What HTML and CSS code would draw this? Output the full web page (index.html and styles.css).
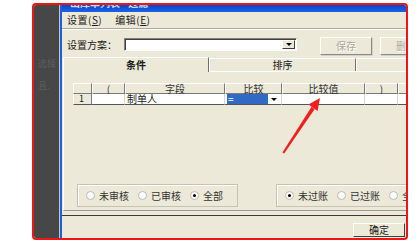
FILE: index.html
```html
<!DOCTYPE html>
<html lang="zh">
<head>
<meta charset="utf-8">
<link rel="stylesheet" href="styles.css">
</head>
<body>
<div class="frame">
  <div class="side">
    <span class="ghost g1">选择</span>
    <span class="ghost g2">且.</span>
  </div>
  <div class="edge"></div>
  <div class="win">
    <div class="title"><span>出库单列表 - 过滤</span></div>
    <div class="menu">
      <span>设置(<u>S</u>)</span>
      <span>编辑(<u>E</u>)</span>
    </div>
    <div class="sep"></div>
    <div class="tool">
      <span class="lbl">设置方案：</span>
      <div class="combo"><span class="dd"><i class="tri"></i></span></div>
      <button class="btn dis b1">保存</button>
      <button class="btn dis b2">删除</button>
    </div>
    <div class="tabs">
      <div class="tab sel">条件</div>
      <div class="tab t2">排序</div>
      <div class="tab t3"></div>
    </div>
    <div class="pane">
      <div class="grid">
        <div class="h">&nbsp;</div>
        <div class="h">(</div>
        <div class="h">字段</div>
        <div class="h">比较</div>
        <div class="h">比较值</div>
        <div class="h">)</div>
        <div class="h">&nbsp;</div>
        <div class="rn">1</div>
        <div class="c"></div>
        <div class="c fld">制单人</div>
        <div class="c cmp"><span class="eq">=</span><span class="cdd"><i class="tri"></i></span></div>
        <div class="c"></div>
        <div class="c"></div>
        <div class="c"></div>
      </div>
      <div class="groups">
        <div class="grp g-left">
          <span class="opt"><i class="rad"></i>未审核</span>
          <span class="opt"><i class="rad"></i>已审核</span>
          <span class="opt"><i class="rad on"></i>全部</span>
        </div>
        <div class="grp g-right">
          <span class="opt"><i class="rad on"></i>未过账</span>
          <span class="opt"><i class="rad"></i>已过账</span>
          <span class="opt"><i class="rad"></i>全部</span>
        </div>
      </div>
    </div>
    <div class="hr"></div>
    <div class="foot"><button class="btn ok">确定</button></div>
  </div>
</div>
<svg class="arrow" width="420" height="243" viewBox="0 0 420 243">
  <polygon points="282.4,152.6 284.2,153.4 314.6,109.2 311.6,106.8" fill="#f02020"/>
  <polygon points="320,98 308.4,104.6 317.6,111.0" fill="#f02020"/>
</svg>
</body>
</html>
```
FILE: styles.css
```css
* { box-sizing: border-box; }
html, body { margin: 0; padding: 0; }
body {
  width: 420px;
  height: 243px;
  background: #fff;
  font-family: "Noto Sans CJK SC", "Liberation Sans", sans-serif;
  font-size: 10px;
  color: #1a1a1a;
  position: relative;
  overflow: hidden;
}
.frame {
  margin: 3px 0 0 32px;
  width: 376px;
  height: 237px;
  border: 2px solid #f01414;
  border-radius: 4px;
  overflow: hidden;
  display: flex;
  background: #ece9d8;
}
.side {
  width: 25px;
  flex: none;
  background: #474747;
  display: flex;
  flex-direction: column;
  padding: 54px 0 0 4px;
}
.ghost { color: #5e5e5e; font-size: 9px; line-height: 10px; }
.g2 { margin-top: 12px; }
.edge {
  width: 3px;
  flex: none;
  background: #1e5fe2;
  border-left: 1px solid #c4c4c4;
}
.win {
  flex: none;
  width: 420px;
  display: flex;
  flex-direction: column;
}
.title {
  height: 7px;
  background: linear-gradient(#0846c8, #1c62e6);
  overflow: hidden;
  color: #c8d6f8;
  padding-left: 8px;
}
.title span {
  display: block;
  font-size: 10px;
  line-height: 10px;
  margin-top: -7px;
  font-weight: bold;
}
.menu {
  height: 16px;
  display: flex;
  gap: 13px;
  padding-left: 5px;
  align-items: center;
  line-height: 12px;
}
.menu span { letter-spacing: 0.5px; }
.menu u { text-decoration: underline; }
.sep {
  height: 2px;
  border-top: 1px solid #aca899;
  border-bottom: 1px solid #fff;
}
.tool {
  height: 27px;
  display: flex;
  align-items: flex-start;
  padding-left: 5px;
}
.tool > * { flex: none; }
.lbl {
  width: 57px;
  margin-top: 9px;
  line-height: 12px;
}
.combo {
  margin-top: 8px;
  width: 173px;
  height: 13px;
  background: #fff;
  border: 1px solid;
  border-color: #808080 #fff #fff #808080;
  box-shadow: inset 1px 1px 0 #404040;
  display: flex;
  justify-content: flex-end;
  padding: 1px;
}
.dd {
  width: 13px;
  height: 100%;
  background: #ece9d8;
  border: 1px solid;
  border-color: #fff #404040 #404040 #fff;
  display: flex;
  align-items: center;
  justify-content: center;
}
.tri {
  width: 0;
  height: 0;
  border-left: 3px solid transparent;
  border-right: 3px solid transparent;
  border-top: 3px solid #000;
}
.btn {
  font: inherit;
  font-size: 10px;
  line-height: 12px;
  padding: 0;
  background: #ece9d8;
  border: 1px solid;
  border-color: #fff #8a8a8a #8a8a8a #fff;
  box-shadow: 1px 1px 0 #d4d0c8;
  color: #1a1a1a;
}
.dis { color: #aca899; text-shadow: 1px 1px 0 #fff; }
.b1 { margin: 7px 0 0 23px; width: 52px; height: 18px; }
.b2 { margin: 7px 0 0 8px; width: 52px; height: 18px; }
.tabs {
  height: 14px;
  display: flex;
  align-items: flex-end;
  padding-left: 1px;
  position: relative;
  z-index: 1;
}
.tab {
  height: 13px;
  line-height: 11px;
  text-align: center;
  border-top: 1px solid #fff;
  border-left: 1px solid #fff;
  border-right: 1px solid #6f6f6f;
  background: #ece9d8;
  flex: none;
}
.sel {
  width: 146px;
  height: 15px;
  margin-bottom: -1px;
  font-weight: bold;
  line-height: 13px;
}
.t2 { width: 147px; }
.t3 { width: 100px; }
.pane {
  height: 140px;
  margin-left: 1px;
  border-top: 1px solid #fff;
  border-left: 1px solid #fff;
  border-bottom: 1px solid #9a9a9a;
  padding: 11px 0 0 9px;
}
.grid {
  display: grid;
  grid-template-columns: 19px 33px 100px 57px 83px 33px 40px;
  grid-template-rows: 11px 11px;
}
.h {
  background: #ece9d8;
  border-top: 1px solid #fff;
  border-left: 1px solid #fff;
  border-right: 1px solid #7a7a7a;
  border-bottom: 1px solid #7a7a7a;
  text-align: center;
  line-height: 9px;
  font-size: 10px;
  color: #333;
}
.rn {
  background: #ece9d8;
  border-left: 1px solid #fff;
  border-right: 1px solid #7a7a7a;
  border-bottom: 1px solid #555;
  padding-left: 5px;
  line-height: 10px;
  font-size: 9px;
}
.c {
  background: #fff;
  border-right: 1px solid #d8d6cc;
  border-bottom: 1px solid #555;
  line-height: 10px;
}
.fld { padding-left: 2px; }
.cmp {
  display: flex;
  background: #fff;
  padding: 0 1px 0 2px;
}
.eq {
  flex: 1;
  background: #316ac5;
  color: #fff;
  padding-left: 1px;
  line-height: 9px;
}
.cdd {
  width: 12px;
  display: flex;
  align-items: center;
  justify-content: center;
}
.groups {
  display: flex;
  gap: 38px;
  margin: 79px 0 0 4px;
}
.grp {
  flex: none;
  height: 23px;
  border: 1px solid #c6c3b4;
  box-shadow: inset 1px 1px 0 #fff;
  display: flex;
  align-items: center;
  gap: 9px;
  padding-left: 8px;
}
.g-left { width: 161px; }
.g-right { width: 170px; }
.opt {
  display: flex;
  align-items: center;
  gap: 4px;
  color: #333;
  line-height: 12px;
  white-space: nowrap;
}
.rad {
  width: 9px;
  height: 9px;
  border-radius: 50%;
  background: #fff;
  border: 1px solid #b8b8b8;
  display: flex;
  align-items: center;
  justify-content: center;
}
.rad.on::after {
  content: "";
  width: 3px;
  height: 3px;
  border-radius: 50%;
  background: #000;
}
.hr {
  height: 1px;
  margin-top: 4px;
  background: #3a3a3a;
}
.foot {
  padding: 6px 0 0 291px;
}
.ok {
  width: 52px;
  height: 14px;
  line-height: 11px;
  border-color: #fff #404040 #404040 #fff;
  box-shadow: none;
}
.arrow {
  position: absolute;
  left: 0;
  top: 0;
  pointer-events: none;
}
```
